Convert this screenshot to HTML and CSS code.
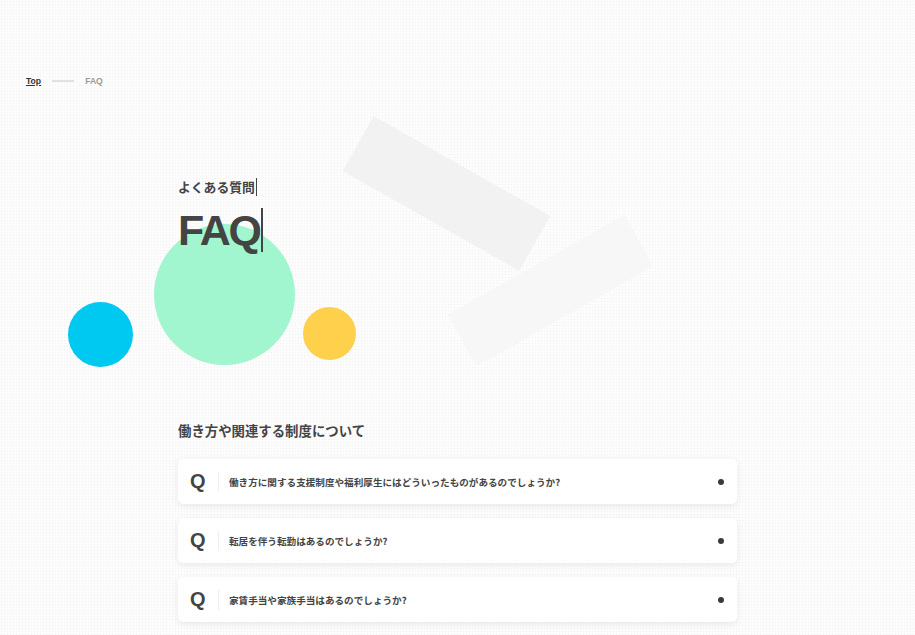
FILE: index.html
```html
<!DOCTYPE html>
<html lang="ja">
<head>
<meta charset="utf-8">
<title>FAQ</title>
<link rel="stylesheet" href="styles.css">
</head>
<body>
<div class="deco">
  <div class="bar bar-1"></div>
  <div class="bar bar-2"></div>
  <div class="circle circle-green"></div>
  <div class="circle circle-blue"></div>
  <div class="circle circle-yellow"></div>
</div>
<nav class="breadcrumb">
  <a class="crumb-link" href="#">Top</a>
  <span class="crumb-line"></span>
  <span class="crumb-current">FAQ</span>
</nav>
<header class="hero">
  <p class="hero-sub"><span class="typing">よくある質問</span></p>
  <h1 class="hero-title"><span class="typing typing-lg">FAQ</span></h1>
</header>
<main class="faq">
  <h2 class="faq-heading">働き方や関連する制度について</h2>
  <ul class="faq-list">
    <li class="faq-item"><span class="faq-q">Q</span><span class="faq-sep"></span><span class="faq-text">働き方に関する支援制度や福利厚生にはどういったものがあるのでしょうか?</span><span class="faq-dot"></span></li>
    <li class="faq-item"><span class="faq-q">Q</span><span class="faq-sep"></span><span class="faq-text">転居を伴う転勤はあるのでしょうか?</span><span class="faq-dot"></span></li>
    <li class="faq-item"><span class="faq-q">Q</span><span class="faq-sep"></span><span class="faq-text">家賃手当や家族手当はあるのでしょうか?</span><span class="faq-dot"></span></li>
  </ul>
</main>
</body>
</html>
```
FILE: styles.css
```css
* { box-sizing: border-box; }
html, body { margin: 0; padding: 0; }
body {
  font-family: "Liberation Sans", "Noto Sans CJK JP", sans-serif;
  color: #444;
  background-color: #fcfcfc;
  background-image: radial-gradient(circle, #f1f1f1 0.6px, transparent 0.9px);
  background-size: 3px 3px;
  height: 635px;
  overflow: hidden;
  position: relative;
}
.deco { position: absolute; inset: 0; pointer-events: none; z-index: 0; }
.bar { position: absolute; width: 203px; }
.bar-1 {
  left: 345px; top: 162px; height: 63px;
  background: #f2f2f2;
  transform: rotate(29.5deg);
}
.bar-2 {
  left: 449px; top: 261px; height: 59px;
  background: #f7f7f7;
  transform: rotate(-29.5deg);
}
.circle { position: absolute; border-radius: 50%; }
.circle-green { left: 154px; top: 224px; width: 141px; height: 141px; background: #a1f6cf; }
.circle-blue { left: 68px; top: 302px; width: 65px; height: 65px; background: #00c9f1; }
.circle-yellow { left: 303px; top: 307px; width: 53px; height: 53px; background: #fed04c; }

.breadcrumb, .hero, .faq { position: relative; z-index: 1; }
.breadcrumb {
  display: flex; align-items: center; gap: 11px;
  padding: 75px 0 0 26px;
  font-size: 8.6px; line-height: 12px; font-weight: 700;
}
.crumb-link { color: #333; text-decoration: underline; }
.crumb-line { width: 22px; height: 2px; background: #e2e2e2; }
.crumb-current { color: #999; }

.hero { margin: 91px 0 0 178px; }
.hero-sub {
  margin: 0; font-size: 12.8px; line-height: 18px; font-weight: 700;
  font-family: "Noto Sans CJK JP", sans-serif;
}
.typing { display: inline-block; border-right: 1.5px solid #444; padding-right: 1px; }
.hero-title {
  margin: 12px 0 0; font-size: 43px; line-height: 44px; font-weight: 700;
}
.typing-lg { border-right-width: 2px; padding-right: 1px; letter-spacing: -2.2px; }

.faq { margin: 169px 0 0 178px; width: 559px; }
.faq-heading {
  margin: 0; font-size: 13.4px; line-height: 18px; font-weight: 700;
  font-family: "Noto Sans CJK JP", sans-serif;
}
.faq-list { list-style: none; margin: 20px 0 0; padding: 0; display: flex; flex-direction: column; gap: 14px; }
.faq-item {
  display: flex; align-items: center; height: 45px;
  padding: 0 13px 0 12px;
  background: #fff; border-radius: 5px;
  box-shadow: 0 2px 7px rgba(0, 0, 0, 0.08);
}
.faq-q { font-size: 20px; font-weight: 700; width: 17px; }
.faq-sep { width: 1px; height: 20px; background: #eee; margin: 0 10px 0 11px; }
.faq-text {
  flex: 1; font-size: 9.6px; font-weight: 700;
  font-family: "Noto Sans CJK JP", sans-serif;
}
.faq-dot { width: 6px; height: 6px; border-radius: 50%; background: #3a3a3a; }
```
